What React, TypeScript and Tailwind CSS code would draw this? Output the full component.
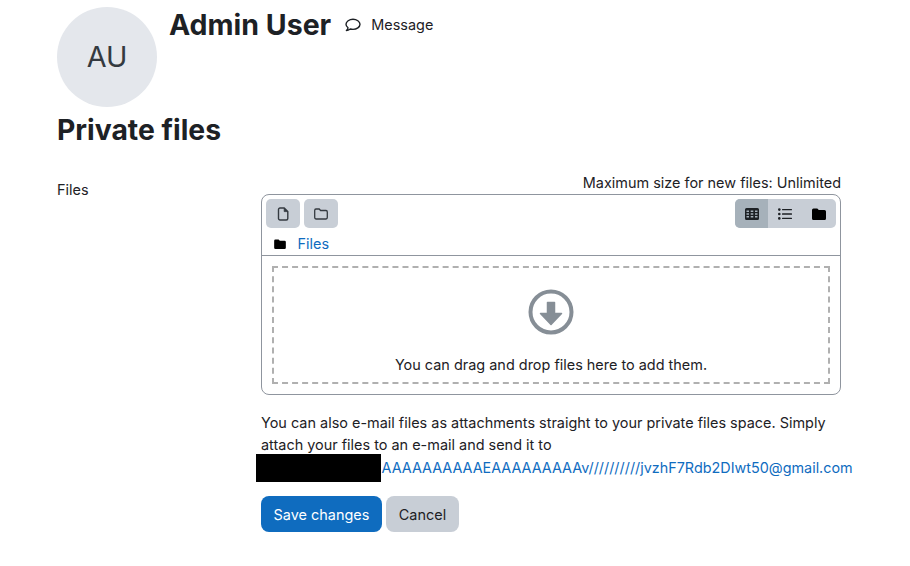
import React from "react";

const CommentIcon = () => (
  <svg width="16" height="14" viewBox="0 0 16 14" fill="none" stroke="#1d2125" strokeWidth="1.4" strokeLinejoin="round">
    <path d="M8 1.200c3.700 0 7 2.300 7 5.100s-3.300 5.100-7 5.100c-1 0-1.900-.2-2.700-.4C4.400 11.700 3 12.600 1.400 12.600c.8-.8 1.500-1.900 1.600-2.800C1.800 8.900 1 7.700 1 6.300 1 3.500 4.300 1.200 8 1.200z" />
  </svg>
);

const FileIcon = () => (
  <svg width="12" height="14" viewBox="0 0 12 14" fill="none" stroke="#343a40" strokeWidth="1.4">
    <path d="M3 1h4.200L10.800 4.600V11.500A1.500 1.500 0 0 1 9.300 13H3a1.500 1.500 0 0 1-1.500-1.500v-9A1.500 1.500 0 0 1 3 1z" />
    <path d="M7.200 1v3.600h3.600" fill="#343a40" strokeWidth="0.8" />
  </svg>
);

const FolderIcon = () => (
  <svg width="14" height="12" viewBox="0 0 14 12" fill="none" stroke="#343a40" strokeWidth="1.3">
    <path d="M2 1h3.200l1.400 1.500H12a1.400 1.400 0 0 1 1.300 1.400v5.700a1.400 1.400 0 0 1-1.300 1.400H2A1.400 1.400 0 0 1 .7 9.600V2.400A1.400 1.400 0 0 1 2 1z" />
  </svg>
);

const SolidFolder = ({ w = 14, h = 12 }: { w?: number; h?: number }) => (
  <svg width={w} height={h} viewBox="0 0 14 12" fill="#000">
    <path d="M1.500 .5h3.800l1.500 1.500h5.700A1.500 1.500 0 0 1 14 3.500v7a1.500 1.500 0 0 1-1.500 1.500h-11A1.500 1.500 0 0 1 0 10.500V2A1.500 1.500 0 0 1 1.500 .5z" />
  </svg>
);

const GridIcon = () => (
  <svg width="14" height="12" viewBox="0 0 14 12" fill="#1d2125">
    <path
      fillRule="evenodd"
      d="M1.500 0h11A1.500 1.500 0 0 1 14 1.500v9a1.500 1.500 0 0 1-1.500 1.500h-11A1.500 1.500 0 0 1 0 10.500v-9A1.500 1.500 0 0 1 1.500 0zM1.500 2.500v1.500h2.500V2.500zM5.700 2.500v1.500h2.600V2.500zM10 2.500v1.500h2.500V2.500zM1.500 5.200v1.500h2.500V5.200zM5.700 5.200v1.500h2.600V5.200zM10 5.200v1.500h2.500V5.200zM1.500 8v1.500h2.500V8zM5.700 8v1.500h2.600V8zM10 8v1.500h2.500V8z"
    />
  </svg>
);

const ListIcon = () => (
  <svg width="14" height="12" viewBox="0 0 14 12" fill="#1d2125">
    <circle cx="1.300" cy="1.600" r="1.300" />
    <circle cx="1.300" cy="6" r="1.300" />
    <circle cx="1.300" cy="10.400" r="1.300" />
    <rect x="4" y="0.900" width="10" height="1.400" rx="0.500" />
    <rect x="4" y="5.300" width="10" height="1.400" rx="0.500" />
    <rect x="4" y="9.700" width="10" height="1.400" rx="0.500" />
  </svg>
);

const DropIcon = () => (
  <svg width="46" height="46" viewBox="0 0 46 46">
    <circle cx="23" cy="23" r="20.500" fill="none" stroke="#868e96" strokeWidth="4" />
    <path d="M19.500 13.500h7v11h7L23 35.500 12.500 24.500h7z" fill="#868e96" stroke="#868e96" strokeWidth="1.500" strokeLinejoin="round" />
  </svg>
);

export default function App() {
  return (
    <div className="w-[910px] h-[566px] overflow-hidden bg-white text-[#1d2125] font-['Inter',sans-serif] text-[14.45px] pl-[57px] pt-[7px]">
      {/* Page header */}
      <div className="flex items-start">
        <div className="w-[100px] h-[100px] rounded-full bg-[#e4e7ec] flex items-center justify-center text-[28.8px] text-[#343a40]">
          AU
        </div>
        <h2 className="ml-[12px] text-[28.5px] leading-[36px] font-bold">Admin User</h2>
        <div className="ml-[14px] mt-[9px] flex items-center gap-[10px] leading-[18px]">
          <CommentIcon />
          <span>Message</span>
        </div>
      </div>

      <h2 className="mt-[4px] text-[28.3px] leading-[38px] font-bold">Private files</h2>

      {/* Form row */}
      <div className="mt-[24px] flex">
        <div className="w-[204px] pt-[8px] leading-[17px]">Files</div>
        <div className="w-[580px]">
          <div className="text-right leading-[17px] pt-[1px]">Maximum size for new files: Unlimited</div>

          <div className="mt-[3px] h-[201px] rounded-[8px] border border-[#8f959e] flex flex-col">
            <div className="h-[61px] border-b border-[#8f959e] shrink-0">
              <div className="flex justify-between px-[4px] pt-[4px]">
                <div className="flex gap-[4px]">
                  <button className="w-[34px] h-[29px] rounded-[5px] bg-[#c8ced6] flex items-center justify-center">
                    <FileIcon />
                  </button>
                  <button className="w-[34px] h-[29px] rounded-[5px] bg-[#c8ced6] flex items-center justify-center">
                    <FolderIcon />
                  </button>
                </div>
                <div className="flex h-[29px] rounded-[5px] overflow-hidden bg-[#c8ced6]">
                  <div className="w-[33px] bg-[#a6b1ba] flex items-center justify-center">
                    <GridIcon />
                  </div>
                  <div className="w-[34px] flex items-center justify-center">
                    <ListIcon />
                  </div>
                  <div className="w-[34px] flex items-center justify-center">
                    <SolidFolder />
                  </div>
                </div>
              </div>
              <div className="mt-[7px] pl-[12px] flex items-center leading-[17px]">
                <SolidFolder w={12} h={10} />
                <a className="ml-[11.5px] text-[#0f6cbf]">Files</a>
              </div>
            </div>
            <div className="flex-1 m-[10px] border-2 border-dashed border-[#b0b0b0] flex flex-col items-center">
              <div className="mt-[21px]">
                <DropIcon />
              </div>
              <div className="mt-[21px] leading-[17px]">You can drag and drop files here to add them.</div>
            </div>
          </div>

          <p className="mt-[17px] leading-[22px]">
            You can also e-mail files as attachments straight to your private files space. Simply attach your files to an e-mail and send it to
          </p>
          <div className="relative whitespace-nowrap leading-[23px] pl-[120.5px]">
            <span className="absolute left-[-5px] top-[-2px] w-[125px] h-[28px] bg-black" />
            <a className="text-[#0f6cbf] text-[14.38px]">AAAAAAAAAAEAAAAAAAAAv//////////jvzhF7Rdb2DIwt50@gmail.com</a>
          </div>

          <div className="mt-[17px] flex gap-[4px]">
            <button className="w-[121px] h-[36px] pt-px rounded-[8px] bg-[#0f6cbf] text-white">Save changes</button>
            <button className="w-[73px] h-[36px] pt-px rounded-[8px] bg-[#c8ced6]">Cancel</button>
          </div>
        </div>
      </div>
    </div>
  );
}
